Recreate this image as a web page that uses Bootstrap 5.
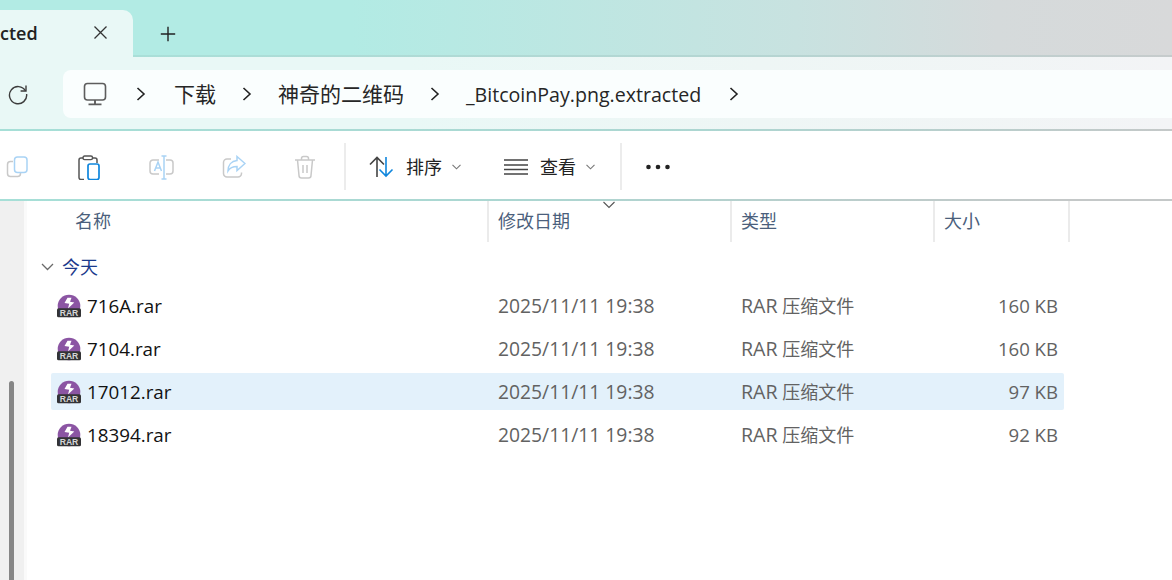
<!DOCTYPE html>
<html lang="zh-CN">
<head>
<meta charset="utf-8">
<title>_BitcoinPay.png.extracted</title>
<link rel="stylesheet" href="https://cdn.jsdelivr.net/npm/bootstrap@5.3.0/dist/css/bootstrap.min.css">
<style>
html,body{margin:0;height:100%;overflow:hidden;background:#fff}
body{width:1172px;height:580px;font-family:"Open Sans","Noto Sans CJK SC",sans-serif;color:#1c1c1c}
.tabbar{height:57px;background:linear-gradient(90deg,#b2ebe4 0,#b2ebe4 30%,#c8e2e0 68%,#d5dadb 85%,#d8d9da 100%);padding-top:10px}
.tab-cur{width:133px;height:47px;background:#e9f8f6;border-top-right-radius:10px;font-size:18px;font-weight:600}
.tab-cur .tab-txt{width:34px;line-height:46px;text-align:right;color:#222}
.tab-x{margin-left:59px;margin-top:15px;display:block;flex:none}
.tab-plus{margin-left:27px;margin-top:16px;display:block}
.tabedge{height:47px;flex:1;position:relative}
.tabedge::after{content:"";display:block;height:2px;margin-top:45px;flex:1;background:linear-gradient(90deg,#a9dfd8,#b5d5d2 60%,#c6cbcc)}
.addrrow{height:72px;background:linear-gradient(90deg,#e9f8f6 0,#e9f8f6 35%,#eef6f5 65%,#f3f4f6 100%);padding-top:13px}
.reload{width:63px;height:48px;padding:10px 0 0 7px}
.addrbar{flex:1;height:48px;background:#fafefe;border-radius:8px 0 0 8px;font-size:21px;color:#262626;white-space:nowrap}
.pc-ic{margin-left:20px;margin-right:27px}
.crumb-chev{flex:none;width:14px}
.crumb-a{margin-left:26px;margin-right:24px;padding-top:1px}
.crumb-b{margin-left:24px;margin-right:24px;padding-top:1px}
.crumb-c{margin-left:24px;margin-right:26px;font-size:19.6px;padding-top:1px}
.rule1{height:2px;background:linear-gradient(90deg,#a6dfd7,#acd6d1 60%,#c4c8c8)}
.toolrow{height:68px;background:#fff;font-size:18px;color:#222;padding-top:4px}
.ti{display:block;flex:none}
.tsep{width:2px;height:47px;background:#ececec;flex:none;margin-top:-1px}
.tlabel{line-height:24px}
.tb-copy{margin-left:6px}
.tb-paste{margin-left:50px}
.tb-ren{margin-left:47px}
.tb-share{margin-left:48px}
.tb-trash{margin-left:48px}
.tb-s1{margin-left:28px}
.tb-sort{margin-left:23px}
.tb-l1{margin-left:12px}
.tb-c1{margin-left:10px}
.tb-view{margin-left:43px}
.tb-l2{margin-left:12px}
.tb-c2{margin-left:10px}
.tb-s2{margin-left:25px}
.tb-more{margin-left:24px}
.rule2{height:2px;background:linear-gradient(90deg,#a6dfd7,#acd6d1 45%,#c4c8c8 90%)}
.mainwrap{height:379px}
.sidestrip{width:27px;background:#f0f0f0;flex:none;padding-top:180px;padding-left:9px;border-right:3px solid #fafafa}
.sb-thumb{width:5px;height:200px;background:#868686;border-radius:3px 3px 0 0}
.listarea{flex:1;min-width:0;font-size:18px}
.colhead{height:40px;display:grid;grid-template-columns:462px 243px 203px 135px;color:#4b5f7c}
.colhead>div{border-right:2px solid #ebebeb;line-height:41px;padding-left:9px;position:relative}
.colhead>div:first-child{padding-left:48px}
.sort-car{position:absolute;right:114px;top:0}
.grp{height:47px;padding:4px 0 0 14px;color:#1b3a8c;line-height:24px;gap:8px}
.frow{height:37px;margin:-1px 108px 7px 24px;display:grid;grid-template-columns:447px 243px 1fr 100px;align-items:center;line-height:24px;color:#626262;border-radius:2px}
.frow.on{background:#e3f1fb}
.fname{color:#111;display:flex;align-items:center;gap:6px;padding-left:6px;height:37px;font-size:18.8px}
.fdate{font-size:19.3px}
.flat{font-size:19.6px;line-height:20px}
.fsize{text-align:right;padding-right:6px;font-size:18.6px}
.rarsvg{display:block;flex:none}
.rarsvg text{font:700 8.6px "Liberation Sans",sans-serif;fill:#d6d6d6;text-anchor:middle}
</style>
</head>
<body>
<svg width="0" height="0" class="position-absolute">
<defs>
<g id="rar">
<circle cx="12" cy="12" r="11.300" fill="#8b55a3"/>
<path d="M10.500 3.800 7.500 9l4.700.8L11 14.500l6.300-6-4.300-.8L14.500 3.800z" fill="#fff"/>
<rect y="14.300" width="24" height="9" rx="1.600" fill="#333336"/>
</g>
</defs>
</svg>

<div class="tabbar d-flex">
  <div class="tab-cur d-flex flex-shrink-0">
    <div class="tab-txt">cted</div>
    <svg class="tab-x" width="15" height="15" viewBox="0 0 15 15"><path d="M1.500 1.500l12 12M13.500 1.500l-12 12" stroke="#333" stroke-width="1.300" fill="none"/></svg>
  </div>
  <div class="tabedge d-flex">
    <svg class="tab-plus position-absolute" width="16" height="16" viewBox="0 0 16 16"><path d="M8 .8v14.400M.8 8h14.400" stroke="#222" stroke-width="1.400" fill="none"/></svg>
  </div>
</div>

<div class="addrrow d-flex">
  <div class="reload">
    <svg width="22" height="22" viewBox="0 0 22 22" fill="none" stroke="#3c3c3c" stroke-width="1.400"><path d="M18.600 8A8.600 8.600 0 1 0 19.600 11"/><path d="M19 2.600V8h-5.400"/></svg>
  </div>
  <div class="addrbar d-flex align-items-center">
    <svg class="pc-ic flex-shrink-0" width="24" height="24" viewBox="0 0 24 24" fill="none" stroke="#5d5d5d" stroke-width="1.600"><rect x="1.500" y="1.500" width="21" height="16.500" rx="3"/><path d="M12 18v4M5.500 22.400h13" stroke-width="1.900"/></svg>
    <svg class="crumb-chev" width="14" height="16" viewBox="0 0 14 16" fill="none" stroke="#222" stroke-width="1.600"><path d="M3.500 2l6.500 6-6.500 6"/></svg>
    <span class="crumb-a">下载</span>
    <svg class="crumb-chev" width="14" height="16" viewBox="0 0 14 16" fill="none" stroke="#222" stroke-width="1.600"><path d="M3.500 2l6.500 6-6.500 6"/></svg>
    <span class="crumb-b">神奇的二维码</span>
    <svg class="crumb-chev" width="14" height="16" viewBox="0 0 14 16" fill="none" stroke="#222" stroke-width="1.600"><path d="M3.500 2l6.500 6-6.500 6"/></svg>
    <span class="crumb-c">_BitcoinPay.png.extracted</span>
    <svg class="crumb-chev" width="14" height="16" viewBox="0 0 14 16" fill="none" stroke="#222" stroke-width="1.600"><path d="M3.500 2l6.500 6-6.500 6"/></svg>
  </div>
</div>
<div class="rule1"></div>

<div class="toolrow d-flex align-items-center">
  <svg class="ti tb-copy" width="22" height="22" viewBox="0 0 22 22" fill="none" stroke-width="1.500"><path d="M7 5.500H4.500a3 3 0 0 0-3 3v9a3 3 0 0 0 3 3h7a3 3 0 0 0 3-3v-.5" stroke="#c9c9c9"/><rect x="8.500" y="1" width="12.500" height="15.500" rx="3" stroke="#a9d3f5"/></svg>
  <svg class="ti tb-paste" width="24" height="25" viewBox="0 0 24 25" fill="none"><path d="M5.500 3H3a2 2 0 0 0-2 2v17.500a2 2 0 0 0 2 2h3M14 3h3a2 2 0 0 1 2 2v3" stroke="#555" stroke-width="1.500"/><rect x="5" y="1" width="9.500" height="3.600" rx="1.600" stroke="#555" stroke-width="1.400"/><rect x="10" y="9" width="11" height="15.500" rx="2" stroke="#0f86dd" stroke-width="1.700"/></svg>
  <svg class="ti tb-ren" width="25" height="25" viewBox="0 0 25 25" fill="none" stroke-width="1.500"><path d="M10 5H4a3 3 0 0 0-3 3v8a3 3 0 0 0 3 3h6M17 5h4a3 3 0 0 1 3 3v8a3 3 0 0 1-3 3h-4" stroke="#c9c9c9"/><path d="M5.500 16l3.500-9 3.500 9M6.800 13h4.400" stroke="#a9d3f5"/><path d="M15 1v23M12.500 1h5M12.500 24h5" stroke="#a9d3f5"/></svg>
  <svg class="ti tb-share" width="24" height="24" viewBox="0 0 24 24" fill="none" stroke-width="1.500"><path d="M9 4H5a3.500 3.500 0 0 0-3.500 3.500v11A3.500 3.500 0 0 0 5 22h11a3.500 3.500 0 0 0 3.500-3.500v-1" stroke="#c9c9c9"/><path d="M15 1.500l8 7-8 7v-4c-4 0-7 1-9 4.500 0-6 3.500-10 9-10.500z" stroke="#a9d3f5"/></svg>
  <svg class="ti tb-trash" width="22" height="24" viewBox="0 0 22 24" fill="none" stroke="#c9c9c9" stroke-width="1.500"><path d="M1 5h20M7.500 5V3.500A2 2 0 0 1 9.500 1.500h3a2 2 0 0 1 2 2V5M3.500 5l1.500 15.500a2.500 2.500 0 0 0 2.500 2.500h7a2.500 2.500 0 0 0 2.500-2.500L18.500 5M9 10v8M13 10v8"/></svg>
  <div class="tsep tb-s1"></div>
  <svg class="ti tb-sort" width="25" height="22" viewBox="0 0 25 22" fill="none" stroke-width="1.600"><path d="M8 21V2M1 8.500 8 1.500l7 7" stroke="#444"/><path d="M17 1v19M10.500 13.500 17 20l6.500-6.500" stroke="#0f86dd"/></svg>
  <span class="tlabel tb-l1">排序</span>
  <svg class="ti tb-c1" width="9" height="6" viewBox="0 0 9 6" fill="none" stroke="#777" stroke-width="1.100"><path d="M.5.800l4 4 4-4"/></svg>
  <svg class="ti tb-view" width="24" height="16" viewBox="0 0 24 16" fill="none" stroke="#444" stroke-width="1.500"><path d="M0 1h24M0 6h24M0 10.500h24M0 15h24"/></svg>
  <span class="tlabel tb-l2">查看</span>
  <svg class="ti tb-c2" width="9" height="6" viewBox="0 0 9 6" fill="none" stroke="#777" stroke-width="1.100"><path d="M.5.800l4 4 4-4"/></svg>
  <div class="tsep tb-s2"></div>
  <svg class="ti tb-more" width="24" height="6" viewBox="0 0 24 6" fill="#222"><circle cx="2.500" cy="3" r="2.300"/><circle cx="12" cy="3" r="2.300"/><circle cx="21.500" cy="3" r="2.300"/></svg>
</div>
<div class="rule2"></div>

<div class="mainwrap d-flex">
  <div class="sidestrip"><div class="sb-thumb"></div></div>
  <div class="listarea">
    <div class="colhead">
      <div>名称</div>
      <div>修改日期<svg class="sort-car" width="14" height="8" viewBox="0 0 14 8" fill="none" stroke="#555" stroke-width="1.100"><path d="M1.500 1l5.500 5.500L12.500 1"/></svg></div>
      <div>类型</div>
      <div>大小</div>
    </div>
    <div class="grp d-flex align-items-center">
      <svg width="13" height="8" viewBox="0 0 13 8" fill="none" stroke="#6a6a6a" stroke-width="1.300"><path d="M1 1l5.500 5.500L12 1"/></svg>
      <span>今天</span>
    </div>
    <div class="frow">
      <div class="fname"><svg class="rarsvg" width="24" height="24" viewBox="0 0 24 24"><use href="#rar"/><text x="12" y="21.900">RAR</text></svg><span>716A.rar</span></div>
      <div class="fdate">2025/11/11 19:38</div><div><span class="flat">RAR</span> 压缩文件</div><div class="fsize">160 KB</div>
    </div>
    <div class="frow">
      <div class="fname"><svg class="rarsvg" width="24" height="24" viewBox="0 0 24 24"><use href="#rar"/><text x="12" y="21.900">RAR</text></svg><span>7104.rar</span></div>
      <div class="fdate">2025/11/11 19:38</div><div><span class="flat">RAR</span> 压缩文件</div><div class="fsize">160 KB</div>
    </div>
    <div class="frow on">
      <div class="fname"><svg class="rarsvg" width="24" height="24" viewBox="0 0 24 24"><use href="#rar"/><text x="12" y="21.900">RAR</text></svg><span>17012.rar</span></div>
      <div class="fdate">2025/11/11 19:38</div><div><span class="flat">RAR</span> 压缩文件</div><div class="fsize">97 KB</div>
    </div>
    <div class="frow">
      <div class="fname"><svg class="rarsvg" width="24" height="24" viewBox="0 0 24 24"><use href="#rar"/><text x="12" y="21.900">RAR</text></svg><span>18394.rar</span></div>
      <div class="fdate">2025/11/11 19:38</div><div><span class="flat">RAR</span> 压缩文件</div><div class="fsize">92 KB</div>
    </div>
  </div>
</div>
</body>
</html>
